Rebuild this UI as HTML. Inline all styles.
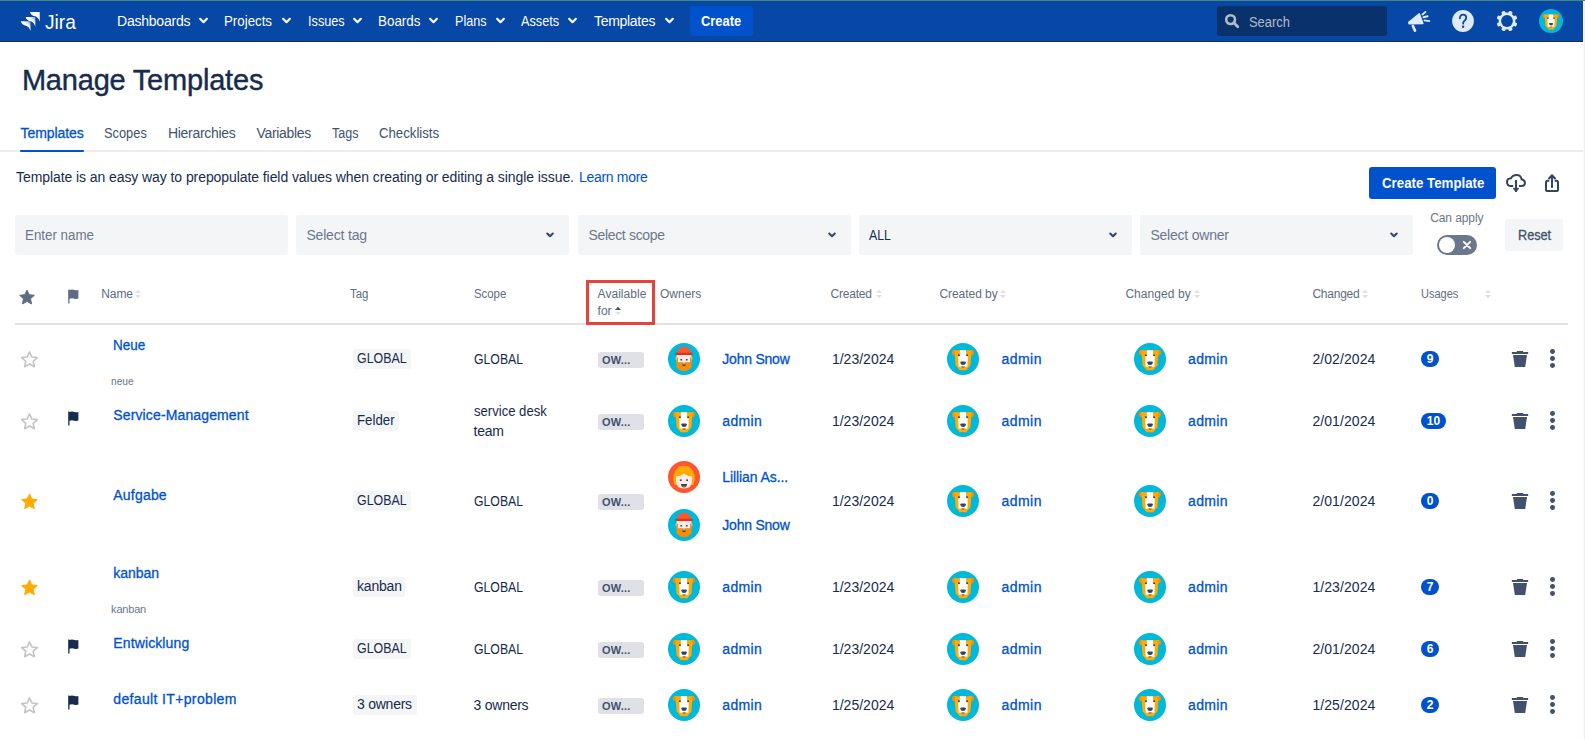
<!DOCTYPE html>
<html><head><meta charset="utf-8"><title>Manage Templates</title>
<style>
html,body{margin:0;padding:0;}
body{width:1585px;height:739px;overflow:hidden;position:relative;background:#fff;font-family:"Liberation Sans",sans-serif;}
.t{position:absolute;white-space:nowrap;line-height:1;}
.r{position:absolute;display:block;}
</style></head><body>
<div class="r" style="left:0px;top:0px;width:1585px;height:1px;background:#46877d;"></div>
<div class="r" style="left:0px;top:1px;width:1583px;height:40px;background:#0747a6;"></div>
<div class="r" style="left:0px;top:41px;width:1583px;height:1px;background:#1c3158;"></div>
<div class="r" style="left:1583px;top:1px;width:1px;height:738px;background:#fbfbfb;"></div>
<div class="r" style="left:1584px;top:1px;width:1px;height:738px;background:#f0f0f0;"></div>
<svg class="r" style="left:20px;top:11px;" width="22" height="21" viewBox="0 0 22 21"><defs>
<linearGradient id="jg1" x1="1" y1="0" x2="0.3" y2="0.7"><stop offset="0" stop-color="#fff" stop-opacity="0.4"/><stop offset="0.5" stop-color="#fff"/></linearGradient>
</defs>
<path d="M10.00,1.00 H19.70 V10.70 C18.73,7.79 17.27,5.85 15.34,5.37 C12.91,4.88 10.48,3.91 10.00,1.00Z" fill="#fff"/>
<path d="M5.60,5.90 H15.30 V15.60 C14.33,12.69 12.88,10.75 10.93,10.27 C8.51,9.78 6.08,8.81 5.60,5.90Z" fill="url(#jg1)"/>
<path d="M0.80,10.30 H10.50 V20.00 C9.53,17.09 8.07,15.15 6.13,14.67 C3.71,14.18 1.29,13.21 0.80,10.30Z" fill="url(#jg1)"/></svg>
<span class="t" style="left:45.00px;top:11px;font-size:21px;color:#ffffff;transform:scaleX(0.9118);transform-origin:0px 0;">Jira</span>
<span class="t" style="left:117.00px;top:14px;font-size:14px;color:#ffffff;letter-spacing:-0.222px;">Dashboards</span>
<svg class="r" style="left:199px;top:17px;" width="9" height="8" viewBox="0 0 9 8"><path d="M1.2,1.8 L4.5,5.2 L7.8,1.8" fill="none" stroke="#fff" stroke-width="2.2" stroke-linecap="round" stroke-linejoin="round"/></svg>
<span class="t" style="left:224.40px;top:14px;font-size:14px;color:#ffffff;transform:scaleX(0.9490);transform-origin:0px 0;">Projects</span>
<svg class="r" style="left:282px;top:17px;" width="9" height="8" viewBox="0 0 9 8"><path d="M1.2,1.8 L4.5,5.2 L7.8,1.8" fill="none" stroke="#fff" stroke-width="2.2" stroke-linecap="round" stroke-linejoin="round"/></svg>
<span class="t" style="left:307.70px;top:14px;font-size:14px;color:#ffffff;transform:scaleX(0.9075);transform-origin:0px 0;">Issues</span>
<svg class="r" style="left:352.5px;top:17px;" width="9" height="8" viewBox="0 0 9 8"><path d="M1.2,1.8 L4.5,5.2 L7.8,1.8" fill="none" stroke="#fff" stroke-width="2.2" stroke-linecap="round" stroke-linejoin="round"/></svg>
<span class="t" style="left:378.40px;top:14px;font-size:14px;color:#ffffff;transform:scaleX(0.9568);transform-origin:0px 0;">Boards</span>
<svg class="r" style="left:429px;top:17px;" width="9" height="8" viewBox="0 0 9 8"><path d="M1.2,1.8 L4.5,5.2 L7.8,1.8" fill="none" stroke="#fff" stroke-width="2.2" stroke-linecap="round" stroke-linejoin="round"/></svg>
<span class="t" style="left:455.00px;top:14px;font-size:14px;color:#ffffff;transform:scaleX(0.9000);transform-origin:0px 0;">Plans</span>
<svg class="r" style="left:496px;top:17px;" width="9" height="8" viewBox="0 0 9 8"><path d="M1.2,1.8 L4.5,5.2 L7.8,1.8" fill="none" stroke="#fff" stroke-width="2.2" stroke-linecap="round" stroke-linejoin="round"/></svg>
<span class="t" style="left:520.80px;top:14px;font-size:14px;color:#ffffff;transform:scaleX(0.9095);transform-origin:0px 0;">Assets</span>
<svg class="r" style="left:567.8px;top:17px;" width="9" height="8" viewBox="0 0 9 8"><path d="M1.2,1.8 L4.5,5.2 L7.8,1.8" fill="none" stroke="#fff" stroke-width="2.2" stroke-linecap="round" stroke-linejoin="round"/></svg>
<span class="t" style="left:594.00px;top:14px;font-size:14px;color:#ffffff;letter-spacing:-0.300px;">Templates</span>
<svg class="r" style="left:664.5px;top:17px;" width="9" height="8" viewBox="0 0 9 8"><path d="M1.2,1.8 L4.5,5.2 L7.8,1.8" fill="none" stroke="#fff" stroke-width="2.2" stroke-linecap="round" stroke-linejoin="round"/></svg>
<div class="r" style="left:690px;top:6px;width:63px;height:30px;background:#0052cc;border-radius:3px;"></div>
<span class="t" style="left:701.20px;top:14px;font-size:14px;color:#ffffff;font-weight:bold;transform:scaleX(0.9227);transform-origin:0px 0;">Create</span>
<div class="r" style="left:1217px;top:6px;width:170px;height:30px;background:#09326c;border-radius:3px;"></div>
<svg class="r" style="left:1224px;top:13px;" width="16" height="16" viewBox="0 0 16 16"><circle cx="6.6" cy="6.6" r="4.4" fill="none" stroke="#b3bac5" stroke-width="2.6"/><path d="M9.8,9.8 L13.8,13.8" stroke="#b3bac5" stroke-width="2.8" stroke-linecap="round"/></svg>
<span class="t" style="left:1249.20px;top:15px;font-size:14px;color:#b3bac5;transform:scaleX(0.9227);transform-origin:0px 0;">Search</span>
<svg class="r" style="left:1406px;top:9px;" width="26" height="24" viewBox="0 0 26 24"><g fill="#deebff" stroke="#deebff" stroke-linejoin="round" stroke-linecap="round"><path d="M2.7,13.3 L13.3,4.7 L16.9,14.5 L3.1,14.9Z" stroke-width="1.4"/><path d="M6.9,17 L9,21.6" stroke-width="2.7"/><path d="M16.5,5.5 L19.5,2.9" stroke-width="1.9"/><path d="M17.5,8.2 L21.6,7.3" stroke-width="1.9"/><path d="M18.5,11.4 L23.3,12.1" stroke-width="1.9"/></g></svg>
<svg class="r" style="left:1452px;top:10px;" width="22" height="22" viewBox="0 0 22 22"><circle cx="11" cy="11" r="10.9" fill="#deebff"/><path d="M7.9,8.3 Q7.9,4.6 11.1,4.6 Q14.2,4.6 14.2,7.8 Q14.2,9.8 12.3,10.9 Q11.1,11.7 11.1,13.7" fill="none" stroke="#0747a6" stroke-width="1.8" stroke-linecap="round"/><circle cx="11.1" cy="16.8" r="1.2" fill="#0747a6"/></svg>
<svg class="r" style="left:1496px;top:10px;" width="22" height="22" viewBox="0 0 22 22"><g transform="translate(11,11)" fill="#deebff"><rect x="-2" y="-10.5" width="4" height="5" rx="1.3" transform="rotate(22.5)"/><rect x="-2" y="-10.5" width="4" height="5" rx="1.3" transform="rotate(67.5)"/><rect x="-2" y="-10.5" width="4" height="5" rx="1.3" transform="rotate(112.5)"/><rect x="-2" y="-10.5" width="4" height="5" rx="1.3" transform="rotate(157.5)"/><rect x="-2" y="-10.5" width="4" height="5" rx="1.3" transform="rotate(202.5)"/><rect x="-2" y="-10.5" width="4" height="5" rx="1.3" transform="rotate(247.5)"/><rect x="-2" y="-10.5" width="4" height="5" rx="1.3" transform="rotate(292.5)"/><rect x="-2" y="-10.5" width="4" height="5" rx="1.3" transform="rotate(337.5)"/><circle r="8.4"/></g><circle cx="11" cy="11" r="5.9" fill="#0747a6"/></svg>
<svg class="r" style="left:1539px;top:9px" width="24" height="24" viewBox="0 0 32 32"><circle cx="16" cy="16" r="16" fill="#00b8d9"/>
<circle cx="7.6" cy="9.4" r="2.6" fill="#ff8b00"/><circle cx="24.4" cy="9.4" r="2.6" fill="#ff8b00"/>
<path d="M7.3,7.2 L24.7,7.2 L23.4,22.4 Q21,24.5 19.4,27.2 L12.6,27.2 Q11,24.5 8.6,22.4 Z" fill="#ffab00"/>
<path d="M12.9,7.2 L18.9,7.2 L19.2,12.1 L20.9,12.6 L20.4,23.8 L11.6,23.8 L11.1,12.6 L12.8,12.1 Z" fill="#fff"/>
<circle cx="11.9" cy="12.2" r="1.05" fill="#344563"/><circle cx="20.1" cy="12.2" r="1.05" fill="#344563"/>
<path d="M13.3,19.4 Q13.3,18.6 14.5,18.6 L17.7,18.6 Q18.9,18.6 18.9,19.4 Q18.6,21.9 16.1,21.9 Q13.6,21.9 13.3,19.4Z" fill="#344563"/>
<path d="M14.2,23.6 L18,23.6 Q16.1,25.3 14.2,23.6Z" fill="#344563"/>
</svg>
<span class="t" style="left:21.90px;top:66px;font-size:29px;color:#172b4d;letter-spacing:-0.200px;-webkit-text-stroke:0.4px currentColor;">Manage Templates</span>
<span class="t" style="left:20.50px;top:126px;font-size:14px;color:#0052cc;letter-spacing:-0.062px;-webkit-text-stroke:0.3px currentColor;">Templates</span>
<span class="t" style="left:104.40px;top:126px;font-size:14px;color:#42526e;transform:scaleX(0.9170);transform-origin:0px 0;">Scopes</span>
<span class="t" style="left:168.00px;top:126px;font-size:14px;color:#42526e;letter-spacing:-0.300px;">Hierarchies</span>
<span class="t" style="left:256.50px;top:126px;font-size:14px;color:#42526e;letter-spacing:-0.312px;">Variables</span>
<span class="t" style="left:331.50px;top:126px;font-size:14px;color:#42526e;transform:scaleX(0.8967);transform-origin:0px 0;">Tags</span>
<span class="t" style="left:378.70px;top:126px;font-size:14px;color:#42526e;transform:scaleX(0.9422);transform-origin:0px 0;">Checklists</span>
<div class="r" style="left:0px;top:150px;width:1583px;height:2px;background:#ebecf0;"></div>
<div class="r" style="left:20px;top:150px;width:64px;height:2px;background:#0052cc;border-radius:1px;"></div>
<span class="t" style="left:16.00px;top:170px;font-size:14px;color:#172b4d;letter-spacing:-0.077px;">Template is an easy way to prepopulate field values when creating or editing a single issue.</span>
<span class="t" style="left:578.90px;top:170px;font-size:14px;color:#0052cc;letter-spacing:-0.289px;">Learn more</span>
<div class="r" style="left:1369px;top:167px;width:127px;height:32px;background:#0052cc;border-radius:3px;"></div>
<span class="t" style="left:1381.50px;top:176px;font-size:14px;color:#ffffff;font-weight:bold;transform:scaleX(0.9491);transform-origin:0px 0;">Create Template</span>
<svg class="r" style="left:1504px;top:172px;" width="24" height="22" viewBox="0 0 24 22"><g fill="none" stroke="#344563" stroke-width="2" stroke-linecap="butt"><path d="M9.2,14 L7,14 Q3,14 3,10.2 Q3,6.5 7,6.3 Q8.5,3 12.5,3 Q16.8,3 17.6,7.3 Q21,8.3 21,11 Q21,14 17.5,14 L15,14"/><path d="M12,8 L12,17"/></g><path d="M9.3,16.3 L14.7,16.3 L12,20Z" fill="#344563" stroke="#344563" stroke-width="1" stroke-linejoin="round"/></svg>
<svg class="r" style="left:1543px;top:172px;" width="18" height="22" viewBox="0 0 18 22"><g fill="none" stroke="#344563" stroke-width="2"><path d="M6.3,8.8 L4.6,8.8 Q3,8.8 3,10.4 L3,17.4 Q3,19 4.6,19 L13.4,19 Q15,19 15,17.4 L15,10.4 Q15,8.8 13.4,8.8 L11.7,8.8"/><path d="M9,3.5 L9,15.8" /><path d="M6,6.5 L9,3.2 L12,6.5" stroke-linecap="round" stroke-linejoin="round"/></g></svg>
<div class="r" style="left:15px;top:215px;width:273px;height:40px;background:#f4f5f7;border-radius:3px;"></div>
<span class="t" style="left:25.40px;top:228px;font-size:14px;color:#6b778c;transform:scaleX(0.9534);transform-origin:0px 0;">Enter name</span>
<div class="r" style="left:296px;top:215px;width:273px;height:40px;background:#f4f5f7;border-radius:3px;"></div>
<span class="t" style="left:306.40px;top:228px;font-size:14px;color:#6b778c;letter-spacing:-0.167px;">Select tag</span>
<svg class="r" style="left:545px;top:230px;" width="10" height="10" viewBox="0 0 10 10"><path d="M2.2,3.5 L5,6.3 L7.8,3.5" fill="none" stroke="#344563" stroke-width="2" stroke-linecap="round" stroke-linejoin="round"/></svg>
<div class="r" style="left:578px;top:215px;width:273px;height:40px;background:#f4f5f7;border-radius:3px;"></div>
<span class="t" style="left:588.40px;top:228px;font-size:14px;color:#6b778c;letter-spacing:-0.318px;">Select scope</span>
<svg class="r" style="left:827px;top:230px;" width="10" height="10" viewBox="0 0 10 10"><path d="M2.2,3.5 L5,6.3 L7.8,3.5" fill="none" stroke="#344563" stroke-width="2" stroke-linecap="round" stroke-linejoin="round"/></svg>
<div class="r" style="left:859px;top:215px;width:273px;height:40px;background:#f4f5f7;border-radius:3px;"></div>
<span class="t" style="left:869.40px;top:228px;font-size:14px;color:#172b4d;transform:scaleX(0.8800);transform-origin:0px 0;">ALL</span>
<svg class="r" style="left:1108px;top:230px;" width="10" height="10" viewBox="0 0 10 10"><path d="M2.2,3.5 L5,6.3 L7.8,3.5" fill="none" stroke="#344563" stroke-width="2" stroke-linecap="round" stroke-linejoin="round"/></svg>
<div class="r" style="left:1140px;top:215px;width:273px;height:40px;background:#f4f5f7;border-radius:3px;"></div>
<span class="t" style="left:1150.40px;top:228px;font-size:14px;color:#6b778c;letter-spacing:-0.218px;">Select owner</span>
<svg class="r" style="left:1389px;top:230px;" width="10" height="10" viewBox="0 0 10 10"><path d="M2.2,3.5 L5,6.3 L7.8,3.5" fill="none" stroke="#344563" stroke-width="2" stroke-linecap="round" stroke-linejoin="round"/></svg>
<span class="t" style="left:1430.20px;top:212px;font-size:12px;color:#6b778c;letter-spacing:-0.088px;">Can apply</span>
<div class="r" style="left:1437px;top:235px;width:40px;height:20px;background:#6b778c;border-radius:10px;"></div>
<div class="r" style="left:1439px;top:237px;width:16px;height:16px;background:#ffffff;border-radius:8px;"></div>
<svg class="r" style="left:1460px;top:238px;" width="14" height="14" viewBox="0 0 14 14"><path d="M3.8,3.8 L10.2,10.2 M10.2,3.8 L3.8,10.2" stroke="#fff" stroke-width="1.9" stroke-linecap="round"/></svg>
<div class="r" style="left:1505px;top:219px;width:58px;height:32px;background:#f4f5f7;border-radius:3px;"></div>
<span class="t" style="left:1517.50px;top:228px;font-size:14px;color:#42526e;transform:scaleX(0.9054);transform-origin:0px 0;-webkit-text-stroke:0.3px currentColor;">Reset</span>
<svg class="r" style="left:19px;top:289px;" width="16" height="16" viewBox="0 0 16 16"><path d="M8.00,1.00 L10.17,5.71 L15.32,6.32 L11.52,9.84 L12.53,14.93 L8.00,12.40 L3.47,14.93 L4.48,9.84 L0.68,6.32 L5.83,5.71Z" fill="#5e6c84" stroke="#5e6c84" stroke-width="1" stroke-linejoin="round"/></svg>
<svg class="r" style="left:66.8px;top:289px;" width="12" height="15" viewBox="0 0 12 15"><path d="M1.2,0.6 L2.5,0.6 L2.5,0.9 Q5,0 7.5,0.9 Q9.5,1.7 11.4,1 L11.4,9.6 Q9.5,10.5 7.5,9.7 Q5,8.8 2.5,9.7 L2.5,14.4 L1.2,14.4Z" fill="#5e6c84"/></svg>
<span class="t" style="left:101.30px;top:288px;font-size:12px;color:#5e6c84;letter-spacing:-0.100px;">Name</span>
<svg class="r" style="left:135.4px;top:289px;" width="6" height="10" viewBox="0 0 6 10"><path d="M0,4 L3,0.8 L6,4Z" fill="#dfe1e6"/><path d="M0,6 L3,9.2 L6,6Z" fill="#dfe1e6"/></svg>
<span class="t" style="left:349.60px;top:288px;font-size:12px;color:#5e6c84;transform:scaleX(0.9474);transform-origin:0px 0;">Tag</span>
<span class="t" style="left:473.80px;top:288px;font-size:12px;color:#5e6c84;transform:scaleX(0.9471);transform-origin:0px 0;">Scope</span>
<span class="t" style="left:660.00px;top:288px;font-size:12px;color:#5e6c84;">Owners</span>
<span class="t" style="left:830.60px;top:288px;font-size:12px;color:#5e6c84;letter-spacing:-0.233px;">Created</span>
<svg class="r" style="left:875.5px;top:289px;" width="6" height="10" viewBox="0 0 6 10"><path d="M0,4 L3,0.8 L6,4Z" fill="#dfe1e6"/><path d="M0,6 L3,9.2 L6,6Z" fill="#dfe1e6"/></svg>
<span class="t" style="left:939.40px;top:288px;font-size:12px;color:#5e6c84;letter-spacing:-0.044px;">Created by</span>
<svg class="r" style="left:1000.4px;top:289px;" width="6" height="10" viewBox="0 0 6 10"><path d="M0,4 L3,0.8 L6,4Z" fill="#dfe1e6"/><path d="M0,6 L3,9.2 L6,6Z" fill="#dfe1e6"/></svg>
<span class="t" style="left:1125.40px;top:288px;font-size:12px;color:#5e6c84;letter-spacing:0.067px;">Changed by</span>
<svg class="r" style="left:1193.5px;top:289px;" width="6" height="10" viewBox="0 0 6 10"><path d="M0,4 L3,0.8 L6,4Z" fill="#dfe1e6"/><path d="M0,6 L3,9.2 L6,6Z" fill="#dfe1e6"/></svg>
<span class="t" style="left:1312.40px;top:288px;font-size:12px;color:#5e6c84;letter-spacing:-0.233px;">Changed</span>
<svg class="r" style="left:1361.8px;top:289px;" width="6" height="10" viewBox="0 0 6 10"><path d="M0,4 L3,0.8 L6,4Z" fill="#dfe1e6"/><path d="M0,6 L3,9.2 L6,6Z" fill="#dfe1e6"/></svg>
<span class="t" style="left:1421.40px;top:288px;font-size:12px;color:#5e6c84;transform:scaleX(0.9171);transform-origin:0px 0;">Usages</span>
<svg class="r" style="left:1484.5px;top:289px;" width="6" height="10" viewBox="0 0 6 10"><path d="M0,4 L3,0.8 L6,4Z" fill="#dfe1e6"/><path d="M0,6 L3,9.2 L6,6Z" fill="#dfe1e6"/></svg>
<span class="t" style="left:597.60px;top:288px;font-size:12px;color:#5e6c84;letter-spacing:0.037px;">Available</span>
<span class="t" style="left:597.60px;top:305px;font-size:12px;color:#5e6c84;">for</span>
<svg class="r" style="left:615px;top:306px;" width="6" height="10" viewBox="0 0 6 10"><path d="M0,4 L3,0.8 L6,4Z" fill="#42526e"/><path d="M0,6 L3,9.2 L6,6Z" fill="#dfe1e6"/></svg>
<div class="r" style="left:15px;top:323px;width:1553px;height:2px;background:#dfe1e6;"></div>
<div class="r" style="left:586px;top:280px;width:69px;height:45px;background:transparent;border:3px solid #e3453b;box-sizing:border-box;"></div>
<svg class="r" style="left:21.2px;top:351px;" width="17" height="17" viewBox="0 0 17 17"><path d="M8.50,0.90 L10.79,5.94 L16.30,6.57 L12.21,10.31 L13.32,15.73 L8.50,13.00 L3.68,15.73 L4.79,10.31 L0.70,6.57 L6.21,5.94Z" fill="none" stroke="#c2c4c8" stroke-width="1.6" stroke-linejoin="round"/></svg>
<span class="t" style="left:113.30px;top:338px;font-size:14px;color:#0052cc;transform:scaleX(0.9618);transform-origin:0px 0;-webkit-text-stroke:0.3px currentColor;">Neue</span>
<span class="t" style="left:111.10px;top:376px;font-size:11px;color:#6b778c;transform:scaleX(0.9280);transform-origin:0px 0;">neue</span>
<div class="r" style="left:353px;top:349px;width:58px;height:20px;background:#f4f5f7;border-radius:3px;"></div>
<span class="t" style="left:357.00px;top:351px;font-size:14px;color:#172b4d;transform:scaleX(0.8857);transform-origin:0px 0;">GLOBAL</span>
<span class="t" style="left:473.60px;top:352px;font-size:14px;color:#172b4d;transform:scaleX(0.8768);transform-origin:0px 0;">GLOBAL</span>
<div class="r" style="left:598px;top:352px;width:46px;height:16px;background:#dfe1e6;border-radius:3px;"></div>
<span class="t" style="left:602.00px;top:355px;font-size:11px;color:#42526e;font-weight:bold;letter-spacing:0.175px;">OW...</span>
<svg class="r" style="left:668px;top:343px" width="32" height="32" viewBox="0 0 32 32"><circle cx="16" cy="16" r="16" fill="#00b8d9"/>
<path d="M7.6,15.5 Q7.6,14 8.6,14 L9,17.5 Q7.6,17.3 7.6,15.5Z M24.4,15.5 Q24.4,14 23.4,14 L23,17.5 Q24.4,17.3 24.4,15.5Z" fill="#ffebe6"/>
<rect x="8.6" y="11.5" width="14.8" height="8" fill="#ffebe6"/>
<path d="M8.4,14.5 L10,14.5 L10,19.4 L22,19.4 L22,14.5 L23.6,14.5 L23.6,24 Q22,25.5 21,26.5 Q19,28 16,28 Q13,28 11,26.5 Q10,25.5 8.4,24Z" fill="#ff8b00"/>
<path d="M9.2,10.2 Q9.5,3.8 16,3.8 Q22.5,3.8 22.8,10.2Z" fill="#ff5630"/>
<rect x="7.3" y="9.8" width="17.4" height="2.2" rx="0.8" fill="#de350b"/>
<rect x="12.4" y="16" width="1.7" height="1.5" fill="#344563"/><rect x="17.9" y="16" width="1.7" height="1.5" fill="#344563"/>
<path d="M16,19.3 L17,20.3 L15,20.3Z" fill="#ffebe6"/>
<path d="M14,21.5 L18,21.5 Q17.8,23.3 16,23.3 Q14.2,23.3 14,21.5Z" fill="#344563"/>
</svg>
<span class="t" style="left:722.30px;top:352px;font-size:14px;color:#0052cc;letter-spacing:-0.225px;-webkit-text-stroke:0.3px currentColor;">John Snow</span>
<span class="t" style="left:831.90px;top:352px;font-size:14px;color:#172b4d;letter-spacing:0.013px;">1/23/2024</span>
<svg class="r" style="left:947px;top:343px" width="32" height="32" viewBox="0 0 32 32"><circle cx="16" cy="16" r="16" fill="#00b8d9"/>
<circle cx="7.6" cy="9.4" r="2.6" fill="#ff8b00"/><circle cx="24.4" cy="9.4" r="2.6" fill="#ff8b00"/>
<path d="M7.3,7.2 L24.7,7.2 L23.4,22.4 Q21,24.5 19.4,27.2 L12.6,27.2 Q11,24.5 8.6,22.4 Z" fill="#ffab00"/>
<path d="M12.9,7.2 L18.9,7.2 L19.2,12.1 L20.9,12.6 L20.4,23.8 L11.6,23.8 L11.1,12.6 L12.8,12.1 Z" fill="#fff"/>
<circle cx="11.9" cy="12.2" r="1.05" fill="#344563"/><circle cx="20.1" cy="12.2" r="1.05" fill="#344563"/>
<path d="M13.3,19.4 Q13.3,18.6 14.5,18.6 L17.7,18.6 Q18.9,18.6 18.9,19.4 Q18.6,21.9 16.1,21.9 Q13.6,21.9 13.3,19.4Z" fill="#344563"/>
<path d="M14.2,23.6 L18,23.6 Q16.1,25.3 14.2,23.6Z" fill="#344563"/>
</svg>
<span class="t" style="left:1001.50px;top:352px;font-size:14px;color:#0052cc;letter-spacing:0.450px;-webkit-text-stroke:0.3px currentColor;">admin</span>
<svg class="r" style="left:1134px;top:343px" width="32" height="32" viewBox="0 0 32 32"><circle cx="16" cy="16" r="16" fill="#00b8d9"/>
<circle cx="7.6" cy="9.4" r="2.6" fill="#ff8b00"/><circle cx="24.4" cy="9.4" r="2.6" fill="#ff8b00"/>
<path d="M7.3,7.2 L24.7,7.2 L23.4,22.4 Q21,24.5 19.4,27.2 L12.6,27.2 Q11,24.5 8.6,22.4 Z" fill="#ffab00"/>
<path d="M12.9,7.2 L18.9,7.2 L19.2,12.1 L20.9,12.6 L20.4,23.8 L11.6,23.8 L11.1,12.6 L12.8,12.1 Z" fill="#fff"/>
<circle cx="11.9" cy="12.2" r="1.05" fill="#344563"/><circle cx="20.1" cy="12.2" r="1.05" fill="#344563"/>
<path d="M13.3,19.4 Q13.3,18.6 14.5,18.6 L17.7,18.6 Q18.9,18.6 18.9,19.4 Q18.6,21.9 16.1,21.9 Q13.6,21.9 13.3,19.4Z" fill="#344563"/>
<path d="M14.2,23.6 L18,23.6 Q16.1,25.3 14.2,23.6Z" fill="#344563"/>
</svg>
<span class="t" style="left:1188.00px;top:352px;font-size:14px;color:#0052cc;letter-spacing:0.350px;-webkit-text-stroke:0.3px currentColor;">admin</span>
<span class="t" style="left:1312.40px;top:352px;font-size:14px;color:#172b4d;letter-spacing:0.075px;">2/02/2024</span>
<div class="r" style="left:1421px;top:351px;width:18px;height:16px;background:#0052cc;border-radius:8px;"></div>
<span class="t" style="left:1421px;top:351px;width:18px;height:16px;line-height:16px;text-align:center;font-size:12px;font-weight:bold;color:#fff">9</span>
<svg class="r" style="left:1511px;top:349px;" width="18" height="18" viewBox="0 0 18 18"><path d="M6,1.9 L12,1.9 L12.3,3 L17,3 Q17.2,3 17.2,3.4 L17.2,5 L0.8,5 L0.8,3.4 Q0.8,3 1,3 L5.7,3Z" fill="#42526e"/><path d="M2,6 L16,6 L14.2,17.9 L3.8,17.9Z" fill="#42526e"/></svg>
<div class="r" style="left:1549.8px;top:349.2px;width:4.8px;height:4.8px;background:#42526e;border-radius:50%;"></div>
<div class="r" style="left:1549.8px;top:356.2px;width:4.8px;height:4.8px;background:#42526e;border-radius:50%;"></div>
<div class="r" style="left:1549.8px;top:363.2px;width:4.8px;height:4.8px;background:#42526e;border-radius:50%;"></div>
<svg class="r" style="left:21.2px;top:413px;" width="17" height="17" viewBox="0 0 17 17"><path d="M8.50,0.90 L10.79,5.94 L16.30,6.57 L12.21,10.31 L13.32,15.73 L8.50,13.00 L3.68,15.73 L4.79,10.31 L0.70,6.57 L6.21,5.94Z" fill="none" stroke="#c2c4c8" stroke-width="1.6" stroke-linejoin="round"/></svg>
<svg class="r" style="left:66.8px;top:411px;" width="12" height="15" viewBox="0 0 12 15"><path d="M1.2,0.6 L2.5,0.6 L2.5,0.9 Q5,0 7.5,0.9 Q9.5,1.7 11.4,1 L11.4,9.6 Q9.5,10.5 7.5,9.7 Q5,8.8 2.5,9.7 L2.5,14.4 L1.2,14.4Z" fill="#172b4d"/></svg>
<span class="t" style="left:113.30px;top:408px;font-size:14px;color:#0052cc;letter-spacing:0.129px;-webkit-text-stroke:0.3px currentColor;">Service-Management</span>
<div class="r" style="left:353px;top:411px;width:46px;height:20px;background:#f4f5f7;border-radius:3px;"></div>
<span class="t" style="left:357.00px;top:413px;font-size:14px;color:#172b4d;transform:scaleX(0.9475);transform-origin:0px 0;">Felder</span>
<span class="t" style="left:473.60px;top:404px;font-size:14px;color:#172b4d;transform:scaleX(0.9354);transform-origin:0px 0;">service desk</span>
<span class="t" style="left:473.60px;top:424px;font-size:14px;color:#172b4d;letter-spacing:-0.233px;">team</span>
<div class="r" style="left:598px;top:414px;width:46px;height:16px;background:#dfe1e6;border-radius:3px;"></div>
<span class="t" style="left:602.00px;top:417px;font-size:11px;color:#42526e;font-weight:bold;letter-spacing:0.175px;">OW...</span>
<svg class="r" style="left:668px;top:405px" width="32" height="32" viewBox="0 0 32 32"><circle cx="16" cy="16" r="16" fill="#00b8d9"/>
<circle cx="7.6" cy="9.4" r="2.6" fill="#ff8b00"/><circle cx="24.4" cy="9.4" r="2.6" fill="#ff8b00"/>
<path d="M7.3,7.2 L24.7,7.2 L23.4,22.4 Q21,24.5 19.4,27.2 L12.6,27.2 Q11,24.5 8.6,22.4 Z" fill="#ffab00"/>
<path d="M12.9,7.2 L18.9,7.2 L19.2,12.1 L20.9,12.6 L20.4,23.8 L11.6,23.8 L11.1,12.6 L12.8,12.1 Z" fill="#fff"/>
<circle cx="11.9" cy="12.2" r="1.05" fill="#344563"/><circle cx="20.1" cy="12.2" r="1.05" fill="#344563"/>
<path d="M13.3,19.4 Q13.3,18.6 14.5,18.6 L17.7,18.6 Q18.9,18.6 18.9,19.4 Q18.6,21.9 16.1,21.9 Q13.6,21.9 13.3,19.4Z" fill="#344563"/>
<path d="M14.2,23.6 L18,23.6 Q16.1,25.3 14.2,23.6Z" fill="#344563"/>
</svg>
<span class="t" style="left:722.30px;top:414px;font-size:14px;color:#0052cc;letter-spacing:0.325px;-webkit-text-stroke:0.3px currentColor;">admin</span>
<span class="t" style="left:831.90px;top:414px;font-size:14px;color:#172b4d;letter-spacing:0.013px;">1/23/2024</span>
<svg class="r" style="left:947px;top:405px" width="32" height="32" viewBox="0 0 32 32"><circle cx="16" cy="16" r="16" fill="#00b8d9"/>
<circle cx="7.6" cy="9.4" r="2.6" fill="#ff8b00"/><circle cx="24.4" cy="9.4" r="2.6" fill="#ff8b00"/>
<path d="M7.3,7.2 L24.7,7.2 L23.4,22.4 Q21,24.5 19.4,27.2 L12.6,27.2 Q11,24.5 8.6,22.4 Z" fill="#ffab00"/>
<path d="M12.9,7.2 L18.9,7.2 L19.2,12.1 L20.9,12.6 L20.4,23.8 L11.6,23.8 L11.1,12.6 L12.8,12.1 Z" fill="#fff"/>
<circle cx="11.9" cy="12.2" r="1.05" fill="#344563"/><circle cx="20.1" cy="12.2" r="1.05" fill="#344563"/>
<path d="M13.3,19.4 Q13.3,18.6 14.5,18.6 L17.7,18.6 Q18.9,18.6 18.9,19.4 Q18.6,21.9 16.1,21.9 Q13.6,21.9 13.3,19.4Z" fill="#344563"/>
<path d="M14.2,23.6 L18,23.6 Q16.1,25.3 14.2,23.6Z" fill="#344563"/>
</svg>
<span class="t" style="left:1001.50px;top:414px;font-size:14px;color:#0052cc;letter-spacing:0.450px;-webkit-text-stroke:0.3px currentColor;">admin</span>
<svg class="r" style="left:1134px;top:405px" width="32" height="32" viewBox="0 0 32 32"><circle cx="16" cy="16" r="16" fill="#00b8d9"/>
<circle cx="7.6" cy="9.4" r="2.6" fill="#ff8b00"/><circle cx="24.4" cy="9.4" r="2.6" fill="#ff8b00"/>
<path d="M7.3,7.2 L24.7,7.2 L23.4,22.4 Q21,24.5 19.4,27.2 L12.6,27.2 Q11,24.5 8.6,22.4 Z" fill="#ffab00"/>
<path d="M12.9,7.2 L18.9,7.2 L19.2,12.1 L20.9,12.6 L20.4,23.8 L11.6,23.8 L11.1,12.6 L12.8,12.1 Z" fill="#fff"/>
<circle cx="11.9" cy="12.2" r="1.05" fill="#344563"/><circle cx="20.1" cy="12.2" r="1.05" fill="#344563"/>
<path d="M13.3,19.4 Q13.3,18.6 14.5,18.6 L17.7,18.6 Q18.9,18.6 18.9,19.4 Q18.6,21.9 16.1,21.9 Q13.6,21.9 13.3,19.4Z" fill="#344563"/>
<path d="M14.2,23.6 L18,23.6 Q16.1,25.3 14.2,23.6Z" fill="#344563"/>
</svg>
<span class="t" style="left:1188.00px;top:414px;font-size:14px;color:#0052cc;letter-spacing:0.350px;-webkit-text-stroke:0.3px currentColor;">admin</span>
<span class="t" style="left:1312.40px;top:414px;font-size:14px;color:#172b4d;letter-spacing:0.075px;">2/01/2024</span>
<div class="r" style="left:1421px;top:413px;width:25px;height:16px;background:#0052cc;border-radius:8px;"></div>
<span class="t" style="left:1421px;top:413px;width:25px;height:16px;line-height:16px;text-align:center;font-size:12px;font-weight:bold;color:#fff">10</span>
<svg class="r" style="left:1511px;top:411px;" width="18" height="18" viewBox="0 0 18 18"><path d="M6,1.9 L12,1.9 L12.3,3 L17,3 Q17.2,3 17.2,3.4 L17.2,5 L0.8,5 L0.8,3.4 Q0.8,3 1,3 L5.7,3Z" fill="#42526e"/><path d="M2,6 L16,6 L14.2,17.9 L3.8,17.9Z" fill="#42526e"/></svg>
<div class="r" style="left:1549.8px;top:411.2px;width:4.8px;height:4.8px;background:#42526e;border-radius:50%;"></div>
<div class="r" style="left:1549.8px;top:418.2px;width:4.8px;height:4.8px;background:#42526e;border-radius:50%;"></div>
<div class="r" style="left:1549.8px;top:425.2px;width:4.8px;height:4.8px;background:#42526e;border-radius:50%;"></div>
<svg class="r" style="left:21.2px;top:493px;" width="17" height="17" viewBox="0 0 17 17"><path d="M8.50,0.90 L10.79,5.94 L16.30,6.57 L12.21,10.31 L13.32,15.73 L8.50,13.00 L3.68,15.73 L4.79,10.31 L0.70,6.57 L6.21,5.94Z" fill="#ffab00" stroke="#ffab00" stroke-width="1" stroke-linejoin="round"/></svg>
<span class="t" style="left:113.30px;top:488px;font-size:14px;color:#0052cc;letter-spacing:0.200px;-webkit-text-stroke:0.3px currentColor;">Aufgabe</span>
<div class="r" style="left:353px;top:491px;width:58px;height:20px;background:#f4f5f7;border-radius:3px;"></div>
<span class="t" style="left:357.00px;top:493px;font-size:14px;color:#172b4d;transform:scaleX(0.8857);transform-origin:0px 0;">GLOBAL</span>
<span class="t" style="left:473.60px;top:494px;font-size:14px;color:#172b4d;transform:scaleX(0.8768);transform-origin:0px 0;">GLOBAL</span>
<div class="r" style="left:598px;top:494px;width:46px;height:16px;background:#dfe1e6;border-radius:3px;"></div>
<span class="t" style="left:602.00px;top:497px;font-size:11px;color:#42526e;font-weight:bold;letter-spacing:0.175px;">OW...</span>
<svg class="r" style="left:668px;top:461px" width="32" height="32" viewBox="0 0 32 32"><circle cx="16" cy="16" r="16" fill="#ff5630"/>
<path d="M5.5,16.5 Q4.5,14 6.5,12.5 Q6.5,9 9,8 Q10,5 13,5.2 Q16,4.3 19,5.2 Q22,5 23,8 Q25.5,9 25.5,12.5 Q27.5,14 26.5,16.5 Q27.5,19 26,21 L25.5,24 L6.5,24 L6,21 Q4.5,19 5.5,16.5Z" fill="#ffab00"/>
<path d="M8,15.5 L8,20 Q8,27.5 16,27.5 Q24,27.5 24,20 L24,15.5 Q20,15.5 17.5,13.5 L16,12.5 L14.5,13.5 Q12,15.5 8,15.5Z" fill="#ffebe6"/>
<rect x="11.8" y="18.4" width="1.8" height="1.6" fill="#344563"/><rect x="18.2" y="18.4" width="1.8" height="1.6" fill="#344563"/>
<path d="M12.9,23 L19.1,23 Q18.8,26.4 16,26.4 Q13.2,26.4 12.9,23Z" fill="#344563"/>
<path d="M14.4,25.2 Q16,24.2 17.6,25.2 Q16.8,26.2 16,26.2 Q15.2,26.2 14.4,25.2Z" fill="#ff5630"/>
</svg>
<span class="t" style="left:722.30px;top:470px;font-size:14px;color:#0052cc;letter-spacing:-0.092px;-webkit-text-stroke:0.3px currentColor;">Lillian As...</span>
<svg class="r" style="left:668px;top:509px" width="32" height="32" viewBox="0 0 32 32"><circle cx="16" cy="16" r="16" fill="#00b8d9"/>
<path d="M7.6,15.5 Q7.6,14 8.6,14 L9,17.5 Q7.6,17.3 7.6,15.5Z M24.4,15.5 Q24.4,14 23.4,14 L23,17.5 Q24.4,17.3 24.4,15.5Z" fill="#ffebe6"/>
<rect x="8.6" y="11.5" width="14.8" height="8" fill="#ffebe6"/>
<path d="M8.4,14.5 L10,14.5 L10,19.4 L22,19.4 L22,14.5 L23.6,14.5 L23.6,24 Q22,25.5 21,26.5 Q19,28 16,28 Q13,28 11,26.5 Q10,25.5 8.4,24Z" fill="#ff8b00"/>
<path d="M9.2,10.2 Q9.5,3.8 16,3.8 Q22.5,3.8 22.8,10.2Z" fill="#ff5630"/>
<rect x="7.3" y="9.8" width="17.4" height="2.2" rx="0.8" fill="#de350b"/>
<rect x="12.4" y="16" width="1.7" height="1.5" fill="#344563"/><rect x="17.9" y="16" width="1.7" height="1.5" fill="#344563"/>
<path d="M16,19.3 L17,20.3 L15,20.3Z" fill="#ffebe6"/>
<path d="M14,21.5 L18,21.5 Q17.8,23.3 16,23.3 Q14.2,23.3 14,21.5Z" fill="#344563"/>
</svg>
<span class="t" style="left:722.30px;top:518px;font-size:14px;color:#0052cc;letter-spacing:-0.225px;-webkit-text-stroke:0.3px currentColor;">John Snow</span>
<span class="t" style="left:831.90px;top:494px;font-size:14px;color:#172b4d;letter-spacing:0.013px;">1/23/2024</span>
<svg class="r" style="left:947px;top:485px" width="32" height="32" viewBox="0 0 32 32"><circle cx="16" cy="16" r="16" fill="#00b8d9"/>
<circle cx="7.6" cy="9.4" r="2.6" fill="#ff8b00"/><circle cx="24.4" cy="9.4" r="2.6" fill="#ff8b00"/>
<path d="M7.3,7.2 L24.7,7.2 L23.4,22.4 Q21,24.5 19.4,27.2 L12.6,27.2 Q11,24.5 8.6,22.4 Z" fill="#ffab00"/>
<path d="M12.9,7.2 L18.9,7.2 L19.2,12.1 L20.9,12.6 L20.4,23.8 L11.6,23.8 L11.1,12.6 L12.8,12.1 Z" fill="#fff"/>
<circle cx="11.9" cy="12.2" r="1.05" fill="#344563"/><circle cx="20.1" cy="12.2" r="1.05" fill="#344563"/>
<path d="M13.3,19.4 Q13.3,18.6 14.5,18.6 L17.7,18.6 Q18.9,18.6 18.9,19.4 Q18.6,21.9 16.1,21.9 Q13.6,21.9 13.3,19.4Z" fill="#344563"/>
<path d="M14.2,23.6 L18,23.6 Q16.1,25.3 14.2,23.6Z" fill="#344563"/>
</svg>
<span class="t" style="left:1001.50px;top:494px;font-size:14px;color:#0052cc;letter-spacing:0.450px;-webkit-text-stroke:0.3px currentColor;">admin</span>
<svg class="r" style="left:1134px;top:485px" width="32" height="32" viewBox="0 0 32 32"><circle cx="16" cy="16" r="16" fill="#00b8d9"/>
<circle cx="7.6" cy="9.4" r="2.6" fill="#ff8b00"/><circle cx="24.4" cy="9.4" r="2.6" fill="#ff8b00"/>
<path d="M7.3,7.2 L24.7,7.2 L23.4,22.4 Q21,24.5 19.4,27.2 L12.6,27.2 Q11,24.5 8.6,22.4 Z" fill="#ffab00"/>
<path d="M12.9,7.2 L18.9,7.2 L19.2,12.1 L20.9,12.6 L20.4,23.8 L11.6,23.8 L11.1,12.6 L12.8,12.1 Z" fill="#fff"/>
<circle cx="11.9" cy="12.2" r="1.05" fill="#344563"/><circle cx="20.1" cy="12.2" r="1.05" fill="#344563"/>
<path d="M13.3,19.4 Q13.3,18.6 14.5,18.6 L17.7,18.6 Q18.9,18.6 18.9,19.4 Q18.6,21.9 16.1,21.9 Q13.6,21.9 13.3,19.4Z" fill="#344563"/>
<path d="M14.2,23.6 L18,23.6 Q16.1,25.3 14.2,23.6Z" fill="#344563"/>
</svg>
<span class="t" style="left:1188.00px;top:494px;font-size:14px;color:#0052cc;letter-spacing:0.350px;-webkit-text-stroke:0.3px currentColor;">admin</span>
<span class="t" style="left:1312.40px;top:494px;font-size:14px;color:#172b4d;letter-spacing:0.075px;">2/01/2024</span>
<div class="r" style="left:1421px;top:493px;width:18px;height:16px;background:#0052cc;border-radius:8px;"></div>
<span class="t" style="left:1421px;top:493px;width:18px;height:16px;line-height:16px;text-align:center;font-size:12px;font-weight:bold;color:#fff">0</span>
<svg class="r" style="left:1511px;top:491px;" width="18" height="18" viewBox="0 0 18 18"><path d="M6,1.9 L12,1.9 L12.3,3 L17,3 Q17.2,3 17.2,3.4 L17.2,5 L0.8,5 L0.8,3.4 Q0.8,3 1,3 L5.7,3Z" fill="#42526e"/><path d="M2,6 L16,6 L14.2,17.9 L3.8,17.9Z" fill="#42526e"/></svg>
<div class="r" style="left:1549.8px;top:491.2px;width:4.8px;height:4.8px;background:#42526e;border-radius:50%;"></div>
<div class="r" style="left:1549.8px;top:498.2px;width:4.8px;height:4.8px;background:#42526e;border-radius:50%;"></div>
<div class="r" style="left:1549.8px;top:505.2px;width:4.8px;height:4.8px;background:#42526e;border-radius:50%;"></div>
<svg class="r" style="left:21.2px;top:579px;" width="17" height="17" viewBox="0 0 17 17"><path d="M8.50,0.90 L10.79,5.94 L16.30,6.57 L12.21,10.31 L13.32,15.73 L8.50,13.00 L3.68,15.73 L4.79,10.31 L0.70,6.57 L6.21,5.94Z" fill="#ffab00" stroke="#ffab00" stroke-width="1" stroke-linejoin="round"/></svg>
<span class="t" style="left:113.30px;top:566px;font-size:14px;color:#0052cc;letter-spacing:-0.060px;-webkit-text-stroke:0.3px currentColor;">kanban</span>
<span class="t" style="left:111.10px;top:604px;font-size:11px;color:#6b778c;letter-spacing:-0.200px;">kanban</span>
<div class="r" style="left:353px;top:577px;width:52px;height:20px;background:#f4f5f7;border-radius:3px;"></div>
<span class="t" style="left:357.00px;top:579px;font-size:14px;color:#172b4d;letter-spacing:-0.200px;">kanban</span>
<span class="t" style="left:473.60px;top:580px;font-size:14px;color:#172b4d;transform:scaleX(0.8768);transform-origin:0px 0;">GLOBAL</span>
<div class="r" style="left:598px;top:580px;width:46px;height:16px;background:#dfe1e6;border-radius:3px;"></div>
<span class="t" style="left:602.00px;top:583px;font-size:11px;color:#42526e;font-weight:bold;letter-spacing:0.175px;">OW...</span>
<svg class="r" style="left:668px;top:571px" width="32" height="32" viewBox="0 0 32 32"><circle cx="16" cy="16" r="16" fill="#00b8d9"/>
<circle cx="7.6" cy="9.4" r="2.6" fill="#ff8b00"/><circle cx="24.4" cy="9.4" r="2.6" fill="#ff8b00"/>
<path d="M7.3,7.2 L24.7,7.2 L23.4,22.4 Q21,24.5 19.4,27.2 L12.6,27.2 Q11,24.5 8.6,22.4 Z" fill="#ffab00"/>
<path d="M12.9,7.2 L18.9,7.2 L19.2,12.1 L20.9,12.6 L20.4,23.8 L11.6,23.8 L11.1,12.6 L12.8,12.1 Z" fill="#fff"/>
<circle cx="11.9" cy="12.2" r="1.05" fill="#344563"/><circle cx="20.1" cy="12.2" r="1.05" fill="#344563"/>
<path d="M13.3,19.4 Q13.3,18.6 14.5,18.6 L17.7,18.6 Q18.9,18.6 18.9,19.4 Q18.6,21.9 16.1,21.9 Q13.6,21.9 13.3,19.4Z" fill="#344563"/>
<path d="M14.2,23.6 L18,23.6 Q16.1,25.3 14.2,23.6Z" fill="#344563"/>
</svg>
<span class="t" style="left:722.30px;top:580px;font-size:14px;color:#0052cc;letter-spacing:0.325px;-webkit-text-stroke:0.3px currentColor;">admin</span>
<span class="t" style="left:831.90px;top:580px;font-size:14px;color:#172b4d;letter-spacing:0.013px;">1/23/2024</span>
<svg class="r" style="left:947px;top:571px" width="32" height="32" viewBox="0 0 32 32"><circle cx="16" cy="16" r="16" fill="#00b8d9"/>
<circle cx="7.6" cy="9.4" r="2.6" fill="#ff8b00"/><circle cx="24.4" cy="9.4" r="2.6" fill="#ff8b00"/>
<path d="M7.3,7.2 L24.7,7.2 L23.4,22.4 Q21,24.5 19.4,27.2 L12.6,27.2 Q11,24.5 8.6,22.4 Z" fill="#ffab00"/>
<path d="M12.9,7.2 L18.9,7.2 L19.2,12.1 L20.9,12.6 L20.4,23.8 L11.6,23.8 L11.1,12.6 L12.8,12.1 Z" fill="#fff"/>
<circle cx="11.9" cy="12.2" r="1.05" fill="#344563"/><circle cx="20.1" cy="12.2" r="1.05" fill="#344563"/>
<path d="M13.3,19.4 Q13.3,18.6 14.5,18.6 L17.7,18.6 Q18.9,18.6 18.9,19.4 Q18.6,21.9 16.1,21.9 Q13.6,21.9 13.3,19.4Z" fill="#344563"/>
<path d="M14.2,23.6 L18,23.6 Q16.1,25.3 14.2,23.6Z" fill="#344563"/>
</svg>
<span class="t" style="left:1001.50px;top:580px;font-size:14px;color:#0052cc;letter-spacing:0.450px;-webkit-text-stroke:0.3px currentColor;">admin</span>
<svg class="r" style="left:1134px;top:571px" width="32" height="32" viewBox="0 0 32 32"><circle cx="16" cy="16" r="16" fill="#00b8d9"/>
<circle cx="7.6" cy="9.4" r="2.6" fill="#ff8b00"/><circle cx="24.4" cy="9.4" r="2.6" fill="#ff8b00"/>
<path d="M7.3,7.2 L24.7,7.2 L23.4,22.4 Q21,24.5 19.4,27.2 L12.6,27.2 Q11,24.5 8.6,22.4 Z" fill="#ffab00"/>
<path d="M12.9,7.2 L18.9,7.2 L19.2,12.1 L20.9,12.6 L20.4,23.8 L11.6,23.8 L11.1,12.6 L12.8,12.1 Z" fill="#fff"/>
<circle cx="11.9" cy="12.2" r="1.05" fill="#344563"/><circle cx="20.1" cy="12.2" r="1.05" fill="#344563"/>
<path d="M13.3,19.4 Q13.3,18.6 14.5,18.6 L17.7,18.6 Q18.9,18.6 18.9,19.4 Q18.6,21.9 16.1,21.9 Q13.6,21.9 13.3,19.4Z" fill="#344563"/>
<path d="M14.2,23.6 L18,23.6 Q16.1,25.3 14.2,23.6Z" fill="#344563"/>
</svg>
<span class="t" style="left:1188.00px;top:580px;font-size:14px;color:#0052cc;letter-spacing:0.350px;-webkit-text-stroke:0.3px currentColor;">admin</span>
<span class="t" style="left:1312.40px;top:580px;font-size:14px;color:#172b4d;letter-spacing:0.075px;">1/23/2024</span>
<div class="r" style="left:1421px;top:579px;width:18px;height:16px;background:#0052cc;border-radius:8px;"></div>
<span class="t" style="left:1421px;top:579px;width:18px;height:16px;line-height:16px;text-align:center;font-size:12px;font-weight:bold;color:#fff">7</span>
<svg class="r" style="left:1511px;top:577px;" width="18" height="18" viewBox="0 0 18 18"><path d="M6,1.9 L12,1.9 L12.3,3 L17,3 Q17.2,3 17.2,3.4 L17.2,5 L0.8,5 L0.8,3.4 Q0.8,3 1,3 L5.7,3Z" fill="#42526e"/><path d="M2,6 L16,6 L14.2,17.9 L3.8,17.9Z" fill="#42526e"/></svg>
<div class="r" style="left:1549.8px;top:577.2px;width:4.8px;height:4.8px;background:#42526e;border-radius:50%;"></div>
<div class="r" style="left:1549.8px;top:584.2px;width:4.8px;height:4.8px;background:#42526e;border-radius:50%;"></div>
<div class="r" style="left:1549.8px;top:591.2px;width:4.8px;height:4.8px;background:#42526e;border-radius:50%;"></div>
<svg class="r" style="left:21.2px;top:641px;" width="17" height="17" viewBox="0 0 17 17"><path d="M8.50,0.90 L10.79,5.94 L16.30,6.57 L12.21,10.31 L13.32,15.73 L8.50,13.00 L3.68,15.73 L4.79,10.31 L0.70,6.57 L6.21,5.94Z" fill="none" stroke="#c2c4c8" stroke-width="1.6" stroke-linejoin="round"/></svg>
<svg class="r" style="left:66.8px;top:639px;" width="12" height="15" viewBox="0 0 12 15"><path d="M1.2,0.6 L2.5,0.6 L2.5,0.9 Q5,0 7.5,0.9 Q9.5,1.7 11.4,1 L11.4,9.6 Q9.5,10.5 7.5,9.7 Q5,8.8 2.5,9.7 L2.5,14.4 L1.2,14.4Z" fill="#172b4d"/></svg>
<span class="t" style="left:113.30px;top:636px;font-size:14px;color:#0052cc;letter-spacing:0.120px;-webkit-text-stroke:0.3px currentColor;">Entwicklung</span>
<div class="r" style="left:353px;top:639px;width:58px;height:20px;background:#f4f5f7;border-radius:3px;"></div>
<span class="t" style="left:357.00px;top:641px;font-size:14px;color:#172b4d;transform:scaleX(0.8857);transform-origin:0px 0;">GLOBAL</span>
<span class="t" style="left:473.60px;top:642px;font-size:14px;color:#172b4d;transform:scaleX(0.8768);transform-origin:0px 0;">GLOBAL</span>
<div class="r" style="left:598px;top:642px;width:46px;height:16px;background:#dfe1e6;border-radius:3px;"></div>
<span class="t" style="left:602.00px;top:645px;font-size:11px;color:#42526e;font-weight:bold;letter-spacing:0.175px;">OW...</span>
<svg class="r" style="left:668px;top:633px" width="32" height="32" viewBox="0 0 32 32"><circle cx="16" cy="16" r="16" fill="#00b8d9"/>
<circle cx="7.6" cy="9.4" r="2.6" fill="#ff8b00"/><circle cx="24.4" cy="9.4" r="2.6" fill="#ff8b00"/>
<path d="M7.3,7.2 L24.7,7.2 L23.4,22.4 Q21,24.5 19.4,27.2 L12.6,27.2 Q11,24.5 8.6,22.4 Z" fill="#ffab00"/>
<path d="M12.9,7.2 L18.9,7.2 L19.2,12.1 L20.9,12.6 L20.4,23.8 L11.6,23.8 L11.1,12.6 L12.8,12.1 Z" fill="#fff"/>
<circle cx="11.9" cy="12.2" r="1.05" fill="#344563"/><circle cx="20.1" cy="12.2" r="1.05" fill="#344563"/>
<path d="M13.3,19.4 Q13.3,18.6 14.5,18.6 L17.7,18.6 Q18.9,18.6 18.9,19.4 Q18.6,21.9 16.1,21.9 Q13.6,21.9 13.3,19.4Z" fill="#344563"/>
<path d="M14.2,23.6 L18,23.6 Q16.1,25.3 14.2,23.6Z" fill="#344563"/>
</svg>
<span class="t" style="left:722.30px;top:642px;font-size:14px;color:#0052cc;letter-spacing:0.325px;-webkit-text-stroke:0.3px currentColor;">admin</span>
<span class="t" style="left:831.90px;top:642px;font-size:14px;color:#172b4d;letter-spacing:0.013px;">1/23/2024</span>
<svg class="r" style="left:947px;top:633px" width="32" height="32" viewBox="0 0 32 32"><circle cx="16" cy="16" r="16" fill="#00b8d9"/>
<circle cx="7.6" cy="9.4" r="2.6" fill="#ff8b00"/><circle cx="24.4" cy="9.4" r="2.6" fill="#ff8b00"/>
<path d="M7.3,7.2 L24.7,7.2 L23.4,22.4 Q21,24.5 19.4,27.2 L12.6,27.2 Q11,24.5 8.6,22.4 Z" fill="#ffab00"/>
<path d="M12.9,7.2 L18.9,7.2 L19.2,12.1 L20.9,12.6 L20.4,23.8 L11.6,23.8 L11.1,12.6 L12.8,12.1 Z" fill="#fff"/>
<circle cx="11.9" cy="12.2" r="1.05" fill="#344563"/><circle cx="20.1" cy="12.2" r="1.05" fill="#344563"/>
<path d="M13.3,19.4 Q13.3,18.6 14.5,18.6 L17.7,18.6 Q18.9,18.6 18.9,19.4 Q18.6,21.9 16.1,21.9 Q13.6,21.9 13.3,19.4Z" fill="#344563"/>
<path d="M14.2,23.6 L18,23.6 Q16.1,25.3 14.2,23.6Z" fill="#344563"/>
</svg>
<span class="t" style="left:1001.50px;top:642px;font-size:14px;color:#0052cc;letter-spacing:0.450px;-webkit-text-stroke:0.3px currentColor;">admin</span>
<svg class="r" style="left:1134px;top:633px" width="32" height="32" viewBox="0 0 32 32"><circle cx="16" cy="16" r="16" fill="#00b8d9"/>
<circle cx="7.6" cy="9.4" r="2.6" fill="#ff8b00"/><circle cx="24.4" cy="9.4" r="2.6" fill="#ff8b00"/>
<path d="M7.3,7.2 L24.7,7.2 L23.4,22.4 Q21,24.5 19.4,27.2 L12.6,27.2 Q11,24.5 8.6,22.4 Z" fill="#ffab00"/>
<path d="M12.9,7.2 L18.9,7.2 L19.2,12.1 L20.9,12.6 L20.4,23.8 L11.6,23.8 L11.1,12.6 L12.8,12.1 Z" fill="#fff"/>
<circle cx="11.9" cy="12.2" r="1.05" fill="#344563"/><circle cx="20.1" cy="12.2" r="1.05" fill="#344563"/>
<path d="M13.3,19.4 Q13.3,18.6 14.5,18.6 L17.7,18.6 Q18.9,18.6 18.9,19.4 Q18.6,21.9 16.1,21.9 Q13.6,21.9 13.3,19.4Z" fill="#344563"/>
<path d="M14.2,23.6 L18,23.6 Q16.1,25.3 14.2,23.6Z" fill="#344563"/>
</svg>
<span class="t" style="left:1188.00px;top:642px;font-size:14px;color:#0052cc;letter-spacing:0.350px;-webkit-text-stroke:0.3px currentColor;">admin</span>
<span class="t" style="left:1312.40px;top:642px;font-size:14px;color:#172b4d;letter-spacing:0.075px;">2/01/2024</span>
<div class="r" style="left:1421px;top:641px;width:18px;height:16px;background:#0052cc;border-radius:8px;"></div>
<span class="t" style="left:1421px;top:641px;width:18px;height:16px;line-height:16px;text-align:center;font-size:12px;font-weight:bold;color:#fff">6</span>
<svg class="r" style="left:1511px;top:639px;" width="18" height="18" viewBox="0 0 18 18"><path d="M6,1.9 L12,1.9 L12.3,3 L17,3 Q17.2,3 17.2,3.4 L17.2,5 L0.8,5 L0.8,3.4 Q0.8,3 1,3 L5.7,3Z" fill="#42526e"/><path d="M2,6 L16,6 L14.2,17.9 L3.8,17.9Z" fill="#42526e"/></svg>
<div class="r" style="left:1549.8px;top:639.2px;width:4.8px;height:4.8px;background:#42526e;border-radius:50%;"></div>
<div class="r" style="left:1549.8px;top:646.2px;width:4.8px;height:4.8px;background:#42526e;border-radius:50%;"></div>
<div class="r" style="left:1549.8px;top:653.2px;width:4.8px;height:4.8px;background:#42526e;border-radius:50%;"></div>
<svg class="r" style="left:21.2px;top:697px;" width="17" height="17" viewBox="0 0 17 17"><path d="M8.50,0.90 L10.79,5.94 L16.30,6.57 L12.21,10.31 L13.32,15.73 L8.50,13.00 L3.68,15.73 L4.79,10.31 L0.70,6.57 L6.21,5.94Z" fill="none" stroke="#c2c4c8" stroke-width="1.6" stroke-linejoin="round"/></svg>
<svg class="r" style="left:66.8px;top:695px;" width="12" height="15" viewBox="0 0 12 15"><path d="M1.2,0.6 L2.5,0.6 L2.5,0.9 Q5,0 7.5,0.9 Q9.5,1.7 11.4,1 L11.4,9.6 Q9.5,10.5 7.5,9.7 Q5,8.8 2.5,9.7 L2.5,14.4 L1.2,14.4Z" fill="#172b4d"/></svg>
<span class="t" style="left:113.30px;top:692px;font-size:14px;color:#0052cc;letter-spacing:0.353px;-webkit-text-stroke:0.3px currentColor;">default IT+problem</span>
<div class="r" style="left:353px;top:695px;width:64px;height:20px;background:#f4f5f7;border-radius:3px;"></div>
<span class="t" style="left:357.00px;top:697px;font-size:14px;color:#172b4d;letter-spacing:-0.243px;">3 owners</span>
<span class="t" style="left:473.60px;top:698px;font-size:14px;color:#172b4d;letter-spacing:-0.257px;">3 owners</span>
<div class="r" style="left:598px;top:698px;width:46px;height:16px;background:#dfe1e6;border-radius:3px;"></div>
<span class="t" style="left:602.00px;top:701px;font-size:11px;color:#42526e;font-weight:bold;letter-spacing:0.175px;">OW...</span>
<svg class="r" style="left:668px;top:689px" width="32" height="32" viewBox="0 0 32 32"><circle cx="16" cy="16" r="16" fill="#00b8d9"/>
<circle cx="7.6" cy="9.4" r="2.6" fill="#ff8b00"/><circle cx="24.4" cy="9.4" r="2.6" fill="#ff8b00"/>
<path d="M7.3,7.2 L24.7,7.2 L23.4,22.4 Q21,24.5 19.4,27.2 L12.6,27.2 Q11,24.5 8.6,22.4 Z" fill="#ffab00"/>
<path d="M12.9,7.2 L18.9,7.2 L19.2,12.1 L20.9,12.6 L20.4,23.8 L11.6,23.8 L11.1,12.6 L12.8,12.1 Z" fill="#fff"/>
<circle cx="11.9" cy="12.2" r="1.05" fill="#344563"/><circle cx="20.1" cy="12.2" r="1.05" fill="#344563"/>
<path d="M13.3,19.4 Q13.3,18.6 14.5,18.6 L17.7,18.6 Q18.9,18.6 18.9,19.4 Q18.6,21.9 16.1,21.9 Q13.6,21.9 13.3,19.4Z" fill="#344563"/>
<path d="M14.2,23.6 L18,23.6 Q16.1,25.3 14.2,23.6Z" fill="#344563"/>
</svg>
<span class="t" style="left:722.30px;top:698px;font-size:14px;color:#0052cc;letter-spacing:0.325px;-webkit-text-stroke:0.3px currentColor;">admin</span>
<span class="t" style="left:831.90px;top:698px;font-size:14px;color:#172b4d;letter-spacing:0.013px;">1/25/2024</span>
<svg class="r" style="left:947px;top:689px" width="32" height="32" viewBox="0 0 32 32"><circle cx="16" cy="16" r="16" fill="#00b8d9"/>
<circle cx="7.6" cy="9.4" r="2.6" fill="#ff8b00"/><circle cx="24.4" cy="9.4" r="2.6" fill="#ff8b00"/>
<path d="M7.3,7.2 L24.7,7.2 L23.4,22.4 Q21,24.5 19.4,27.2 L12.6,27.2 Q11,24.5 8.6,22.4 Z" fill="#ffab00"/>
<path d="M12.9,7.2 L18.9,7.2 L19.2,12.1 L20.9,12.6 L20.4,23.8 L11.6,23.8 L11.1,12.6 L12.8,12.1 Z" fill="#fff"/>
<circle cx="11.9" cy="12.2" r="1.05" fill="#344563"/><circle cx="20.1" cy="12.2" r="1.05" fill="#344563"/>
<path d="M13.3,19.4 Q13.3,18.6 14.5,18.6 L17.7,18.6 Q18.9,18.6 18.9,19.4 Q18.6,21.9 16.1,21.9 Q13.6,21.9 13.3,19.4Z" fill="#344563"/>
<path d="M14.2,23.6 L18,23.6 Q16.1,25.3 14.2,23.6Z" fill="#344563"/>
</svg>
<span class="t" style="left:1001.50px;top:698px;font-size:14px;color:#0052cc;letter-spacing:0.450px;-webkit-text-stroke:0.3px currentColor;">admin</span>
<svg class="r" style="left:1134px;top:689px" width="32" height="32" viewBox="0 0 32 32"><circle cx="16" cy="16" r="16" fill="#00b8d9"/>
<circle cx="7.6" cy="9.4" r="2.6" fill="#ff8b00"/><circle cx="24.4" cy="9.4" r="2.6" fill="#ff8b00"/>
<path d="M7.3,7.2 L24.7,7.2 L23.4,22.4 Q21,24.5 19.4,27.2 L12.6,27.2 Q11,24.5 8.6,22.4 Z" fill="#ffab00"/>
<path d="M12.9,7.2 L18.9,7.2 L19.2,12.1 L20.9,12.6 L20.4,23.8 L11.6,23.8 L11.1,12.6 L12.8,12.1 Z" fill="#fff"/>
<circle cx="11.9" cy="12.2" r="1.05" fill="#344563"/><circle cx="20.1" cy="12.2" r="1.05" fill="#344563"/>
<path d="M13.3,19.4 Q13.3,18.6 14.5,18.6 L17.7,18.6 Q18.9,18.6 18.9,19.4 Q18.6,21.9 16.1,21.9 Q13.6,21.9 13.3,19.4Z" fill="#344563"/>
<path d="M14.2,23.6 L18,23.6 Q16.1,25.3 14.2,23.6Z" fill="#344563"/>
</svg>
<span class="t" style="left:1188.00px;top:698px;font-size:14px;color:#0052cc;letter-spacing:0.350px;-webkit-text-stroke:0.3px currentColor;">admin</span>
<span class="t" style="left:1312.40px;top:698px;font-size:14px;color:#172b4d;letter-spacing:0.075px;">1/25/2024</span>
<div class="r" style="left:1421px;top:697px;width:18px;height:16px;background:#0052cc;border-radius:8px;"></div>
<span class="t" style="left:1421px;top:697px;width:18px;height:16px;line-height:16px;text-align:center;font-size:12px;font-weight:bold;color:#fff">2</span>
<svg class="r" style="left:1511px;top:695px;" width="18" height="18" viewBox="0 0 18 18"><path d="M6,1.9 L12,1.9 L12.3,3 L17,3 Q17.2,3 17.2,3.4 L17.2,5 L0.8,5 L0.8,3.4 Q0.8,3 1,3 L5.7,3Z" fill="#42526e"/><path d="M2,6 L16,6 L14.2,17.9 L3.8,17.9Z" fill="#42526e"/></svg>
<div class="r" style="left:1549.8px;top:695.2px;width:4.8px;height:4.8px;background:#42526e;border-radius:50%;"></div>
<div class="r" style="left:1549.8px;top:702.2px;width:4.8px;height:4.8px;background:#42526e;border-radius:50%;"></div>
<div class="r" style="left:1549.8px;top:709.2px;width:4.8px;height:4.8px;background:#42526e;border-radius:50%;"></div>
</body></html>
